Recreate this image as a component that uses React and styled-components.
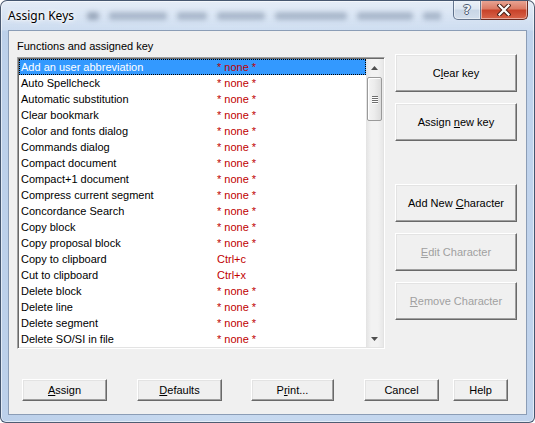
import React from "react";
import styled, { createGlobalStyle } from "styled-components";

const Global = createGlobalStyle`
  html, body { margin: 0; padding: 0; background: #ffffff; }
  body { font-family: "Liberation Sans", Arial, sans-serif; }
  * { box-sizing: border-box; }
`;

const Window = styled.div`
  width: 535px;
  height: 423px;
  display: flex;
  flex-direction: column;
  border-radius: 7px 7px 6px 6px;
  border: 1px solid rgba(28, 44, 70, 0.75);
  box-shadow: inset 0 0 0 1px rgba(255, 255, 255, 0.55);
  background:
    linear-gradient(180deg, rgba(232, 239, 248, 0.9) 0px, rgba(214, 227, 243, 0.6) 29px, rgba(0,0,0,0) 30px),
    linear-gradient(90deg, #bcd0ea 0%, #c8daf0 40%, #c0d3ec 100%);
  overflow: hidden;
`;

const TitleBar = styled.div`
  height: 29px;
  display: flex;
  align-items: flex-start;
  padding-left: 7px;
  padding-right: 6px;
`;

const Title = styled.div`
  font-family: "Segoe UI", "Noto Sans", sans-serif;
  font-size: 12px;
  line-height: 16px;
  margin-top: 7px;
  color: #000;
  text-shadow: 0 0 6px #fff, 0 0 4px #fff, 0 0 2px #fff;
  white-space: nowrap;
  flex-shrink: 0;
`;

const Blur = styled.div`
  flex: 1;
  min-width: 0;
  overflow: hidden;
  display: flex;
  gap: 10px;
  margin: 9px 12px 0 10px;
  padding: 2px 3px;
  height: 14px;
  filter: blur(2.5px);
  opacity: 0.5;
`;

const Smudge = styled.span`
  display: block;
  flex-shrink: 0;
  height: 8px;
  width: ${(p) => p.$w}px;
  background: ${(p) => p.$c || "#7a8ba3"};
  border-radius: 3px;
`;

const Caption = styled.div`
  display: flex;
  flex-shrink: 0;
  margin-top: -1px;
`;

const CapButton = styled.div`
  width: ${(p) => p.$w}px;
  height: 20px;
  display: flex;
  align-items: center;
  justify-content: center;
  border: 1px solid ${(p) => (p.$close ? "#6b2a20" : "rgba(58, 78, 108, 0.75)")};
  border-top: none;
  border-radius: ${(p) => (p.$close ? "0 0 5px 0" : "0 0 0 5px")};
  border-left-width: ${(p) => (p.$close ? "0" : "1px")};
  background: ${(p) =>
    p.$close
      ? "linear-gradient(180deg, #e9a898 0%, #dc7c66 45%, #c8432a 55%, #d8644a 100%)"
      : "linear-gradient(180deg, #edf2f8 0%, #dde6f1 45%, #c9d6e6 55%, #d3deec 100%)"};
  box-shadow: inset 0 0 0 1px rgba(255, 255, 255, 0.45);
`;

const QMark = styled.span`
  font-family: "DejaVu Sans", sans-serif;
  font-weight: bold;
  font-size: 13px;
  line-height: 14px;
  color: #f4f6f9;
  text-shadow: -1px 0 #4b5a70, 1px 0 #4b5a70, 0 -1px #4b5a70, 0 1px #4b5a70;
`;

const Client = styled.div`
  flex: 1;
  margin: 0 7px 7px 7px;
  border: 1px solid #8b9db6;
  background: #f0f0f0;
  padding: 8px 9px 13px 8px;
  display: flex;
  flex-direction: column;
  font-family: "Liberation Sans", Arial, sans-serif;
  font-size: 11px;
  color: #000;
`;

const Body = styled.div`
  display: flex;
  gap: 10px;
`;

const LeftCol = styled.div`
  display: flex;
  flex-direction: column;
  width: 368px;
`;

const Label = styled.div`
  height: 15px;
  line-height: 15px;
  margin-bottom: 3px;
`;

const ListBox = styled.div`
  height: 292px;
  display: flex;
  border: 1px solid;
  border-color: #a0a0a0 #ffffff #ffffff #a0a0a0;
  box-shadow: inset 1px 1px 0 #696969, inset -1px -1px 0 #e3e3e3;
  padding: 1px;
  background: #fff;
`;

const Rows = styled.div`
  flex: 1;
  display: flex;
  flex-direction: column;
  background: #fff;
`;

const Row = styled.div`
  height: 16px;
  line-height: 16px;
  display: grid;
  grid-template-columns: 196px 1fr;
  padding-left: 2px;
  white-space: nowrap;
  background: ${(p) => (p.$sel ? "#3399ff" : "transparent")};
  color: ${(p) => (p.$sel ? "#fff" : "#000")};
  outline: ${(p) => (p.$sel ? "1px dotted #000" : "none")};
  outline-offset: -1px;
`;

const KeyText = styled.span`
  color: #c00000;
`;

const ScrollBar = styled.div`
  width: 17px;
  display: flex;
  flex-direction: column;
  background: linear-gradient(90deg, #e3e3e3 0%, #f2f2f2 30%, #f2f2f2 70%, #e8e8e8 100%);
`;

const Arrow = styled.div`
  height: 17px;
  display: flex;
  align-items: center;
  justify-content: center;
`;

const Track = styled.div`
  flex: 1;
  display: flex;
  flex-direction: column;
  align-items: center;
`;

const Thumb = styled.div`
  width: 15px;
  height: 44px;
  margin-top: 1px;
  border: 1px solid #9a9a9a;
  border-radius: 2px;
  background: linear-gradient(90deg, #f4f4f4 0%, #ececec 50%, #dcdcdc 100%);
  box-shadow: inset 1px 1px 0 #ffffff;
  display: flex;
  flex-direction: column;
  align-items: center;
  justify-content: center;
  gap: 1px;
`;

const Grip = styled.span`
  display: block;
  width: 6px;
  height: 1px;
  background: #6e6e6e;
  box-shadow: 0 1px 0 #ffffff;
`;

const RightCol = styled.div`
  width: 122px;
  padding-top: 15px;
  display: flex;
  flex-direction: column;
  gap: 11px;
`;

const Button = styled.div`
  width: ${(p) => (p.$w ? `${p.$w}px` : "100%")};
  height: ${(p) => p.$h || 38}px;
  margin-top: ${(p) => p.$mt || 0}px;
  margin-left: ${(p) => p.$ml || 0}px;
  display: flex;
  align-items: center;
  justify-content: center;
  background: #f0f0f0;
  border: 1px solid;
  border-color: #ffffff #696969 #696969 #ffffff;
  box-shadow: inset -1px -1px 0 #a0a0a0, inset 1px 1px 0 #e3e3e3;
  color: ${(p) => (p.$disabled ? "#a0a0a0" : "#000")};
  font-size: 11px;
  white-space: nowrap;
  flex-shrink: 0;
`;

const BottomRow = styled.div`
  display: flex;
  margin-top: 30px;
  padding-left: 5px;
`;

const rows = [
  ["Add an user abbreviation", "* none *"],
  ["Auto Spellcheck", "* none *"],
  ["Automatic substitution", "* none *"],
  ["Clear bookmark", "* none *"],
  ["Color and fonts dialog", "* none *"],
  ["Commands dialog", "* none *"],
  ["Compact document", "* none *"],
  ["Compact+1 document", "* none *"],
  ["Compress current segment", "* none *"],
  ["Concordance Search", "* none *"],
  ["Copy block", "* none *"],
  ["Copy proposal block", "* none *"],
  ["Copy to clipboard", "Ctrl+c"],
  ["Cut to clipboard", "Ctrl+x"],
  ["Delete block", "* none *"],
  ["Delete line", "* none *"],
  ["Delete segment", "* none *"],
  ["Delete SO/SI in file", "* none *"],
];

const smudges = [
  [12, "#5d6d85"], [58], [30], [48], [72], [56], [34],
];

export default function App() {
  return (
    <>
      <Global />
      <Window>
        <TitleBar>
          <Title>Assign Keys</Title>
          <Blur>
            {smudges.map(([w, c], i) => (
              <Smudge key={i} $w={w} $c={c} />
            ))}
          </Blur>
          <Caption>
            <CapButton $w={28}>
              <QMark>?</QMark>
            </CapButton>
            <CapButton $w={47} $close>
              <svg width="14" height="12" viewBox="0 0 14 12">
                <path d="M2.5 1.5 L11.5 10.5 M11.5 1.5 L2.5 10.5" stroke="#4a2018" strokeWidth="4.2" strokeLinecap="square" />
                <path d="M2.5 1.5 L11.5 10.5 M11.5 1.5 L2.5 10.5" stroke="#ffffff" strokeWidth="2.2" strokeLinecap="square" />
              </svg>
            </CapButton>
          </Caption>
        </TitleBar>
        <Client>
          <Body>
            <LeftCol>
              <Label>Functions and assigned key</Label>
              <ListBox>
                <Rows>
                  {rows.map(([name, key], i) => (
                    <Row key={name} $sel={i === 0}>
                      <span>{name}</span>
                      <KeyText>{key}</KeyText>
                    </Row>
                  ))}
                </Rows>
                <ScrollBar>
                  <Arrow>
                    <svg width="7" height="4" viewBox="0 0 7 4">
                      <path d="M0 4 L3.5 0 L7 4 Z" fill="#4f4f4f" />
                    </svg>
                  </Arrow>
                  <Track>
                    <Thumb>
                      <Grip />
                      <Grip />
                      <Grip />
                      <Grip />
                    </Thumb>
                  </Track>
                  <Arrow>
                    <svg width="7" height="4" viewBox="0 0 7 4">
                      <path d="M0 0 L7 0 L3.5 4 Z" fill="#4f4f4f" />
                    </svg>
                  </Arrow>
                </ScrollBar>
              </ListBox>
            </LeftCol>
            <RightCol>
              <Button>
                <span>C<u>l</u>ear key</span>
              </Button>
              <Button>
                <span>Assign <u>n</u>ew key</span>
              </Button>
              <Button $mt={32}>
                <span>Add New <u>C</u>haracter</span>
              </Button>
              <Button $disabled>
                <span><u>E</u>dit Character</span>
              </Button>
              <Button $disabled>
                <span><u>R</u>emove Character</span>
              </Button>
            </RightCol>
          </Body>
          <BottomRow>
            <Button $w={85} $h={22}>
              <span><u>A</u>ssign</span>
            </Button>
            <Button $w={85} $h={22} $ml={30}>
              <span><u>D</u>efaults</span>
            </Button>
            <Button $w={83} $h={22} $ml={29}>
              <span>P<u>r</u>int...</span>
            </Button>
            <Button $w={75} $h={22} $ml={30}>
              <span>Cancel</span>
            </Button>
            <Button $w={55} $h={22} $ml={14}>
              <span>Help</span>
            </Button>
          </BottomRow>
        </Client>
      </Window>
    </>
  );
}
